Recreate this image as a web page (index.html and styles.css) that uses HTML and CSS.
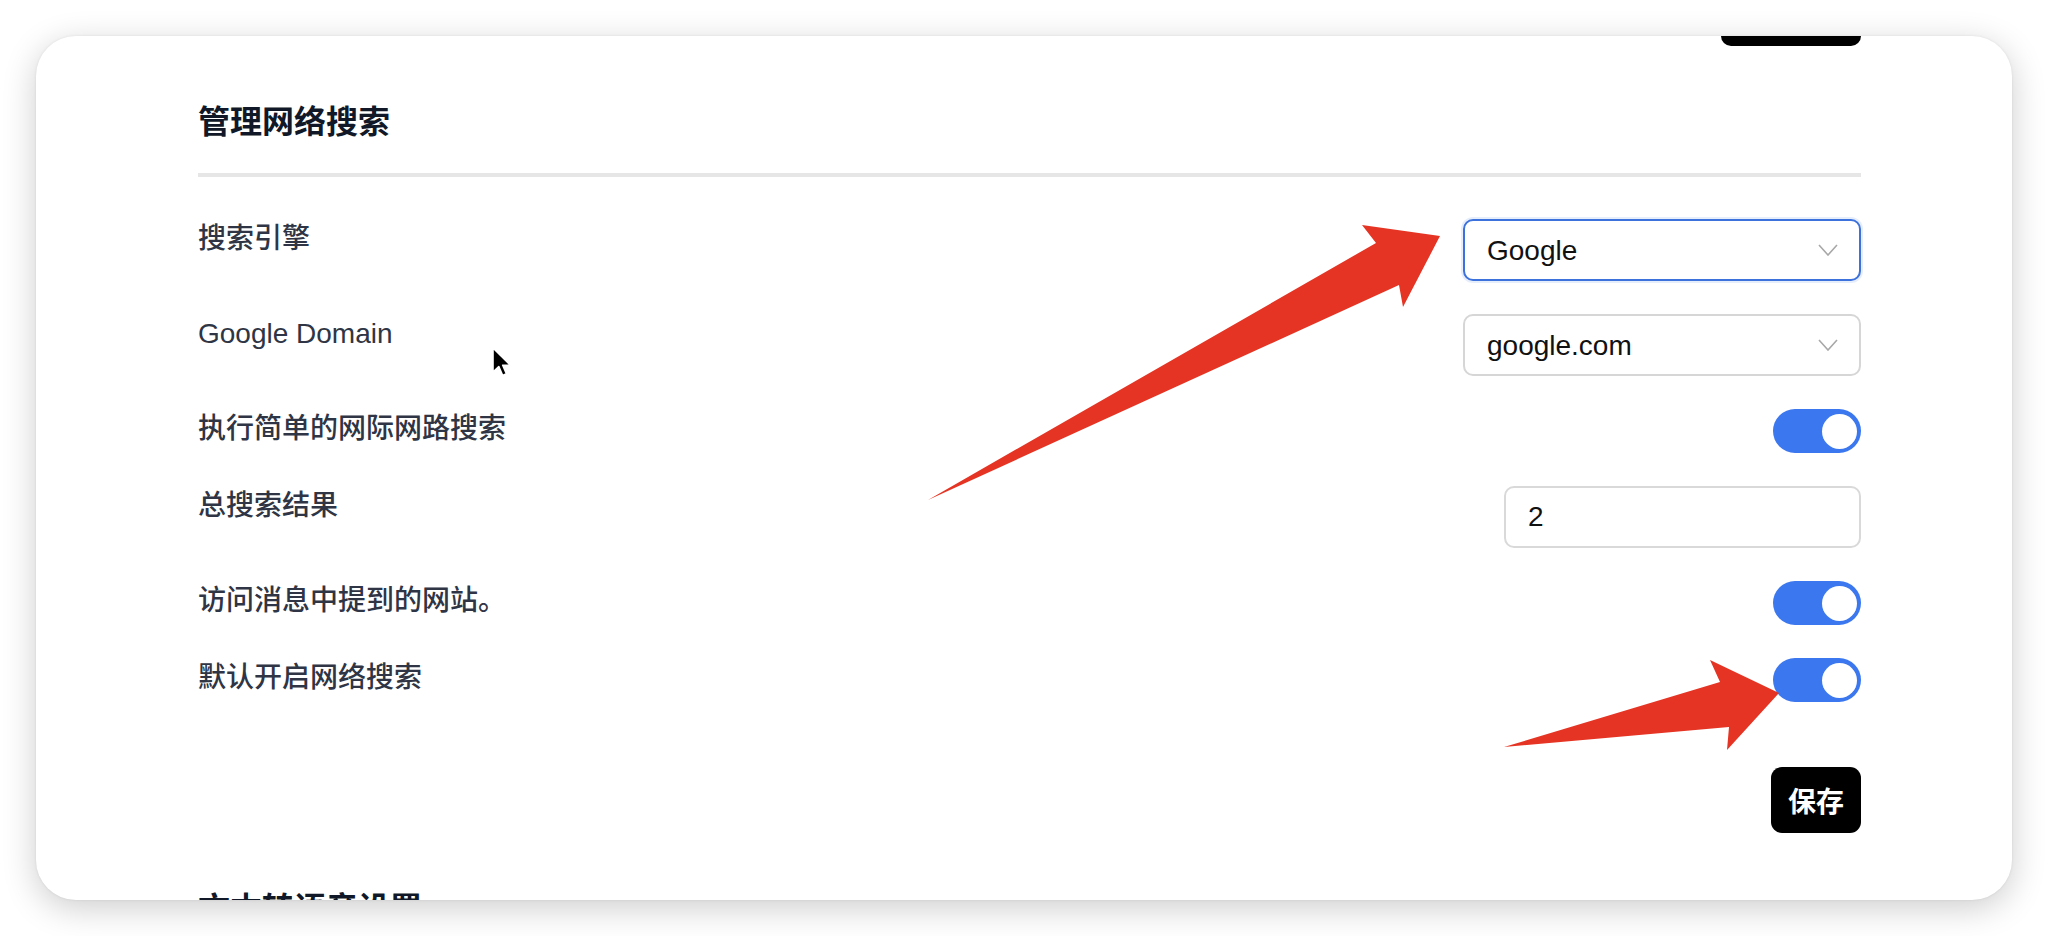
FILE: index.html
```html
<!DOCTYPE html>
<html lang="zh-CN">
<head>
<meta charset="UTF-8">
<meta name="viewport" content="width=device-width, initial-scale=1.0">
<title>管理网络搜索</title>
<link rel="stylesheet" href="styles.css">
</head>
<body>

<div class="window">
  <div class="content">
    <!-- save button of the section above, scrolled almost out of view -->
    <div class="prev-save"></div>

    <h2 class="section-title">管理网络搜索</h2>
    <div class="divider"></div>

    <div class="rows">
      <div class="row">
        <label class="row-label" for="engine">搜索引擎</label>
        <div class="select-wrap focused">
          <select id="engine" class="select">
            <option>Google</option>
            <option>DuckDuckGo</option>
            <option>Bing</option>
          </select>
          <svg class="chevron" width="20" height="12" viewBox="0 0 20 12"><polyline points="1,1 10,11 19,1" fill="none" stroke="#a8a8a8" stroke-width="1.6"/></svg>
        </div>
      </div>

      <div class="row">
        <label class="row-label" for="domain">Google Domain</label>
        <div class="select-wrap">
          <select id="domain" class="select">
            <option>google.com</option>
            <option>google.co.uk</option>
          </select>
          <svg class="chevron" width="20" height="12" viewBox="0 0 20 12"><polyline points="1,1 10,11 19,1" fill="none" stroke="#a8a8a8" stroke-width="1.6"/></svg>
        </div>
      </div>

      <div class="row">
        <span class="row-label">执行简单的网际网路搜索</span>
        <button class="switch" type="button"><span class="knob"></span></button>
      </div>

      <div class="row">
        <label class="row-label" for="total">总搜索结果</label>
        <input id="total" class="text-input" type="number" value="2">
      </div>

      <div class="row">
        <span class="row-label">访问消息中提到的网站。</span>
        <button class="switch" type="button"><span class="knob"></span></button>
      </div>

      <div class="row">
        <span class="row-label">默认开启网络搜索</span>
        <button class="switch" type="button"><span class="knob"></span></button>
      </div>
    </div>

    <div class="actions">
      <button class="save-btn" type="button">保存</button>
    </div>

    <h2 class="section-title next">文本转语音设置</h2>
  </div>
</div>

<!-- annotations drawn on top of the screenshot -->
<svg class="annotations" width="2048" height="936" viewBox="0 0 2048 936">
  <polygon fill="#e53423" points="928,500 1376,243 1362,225 1440,236 1403,307 1399,285"/>
  <polygon fill="#e53423" points="1504,747 1720,682 1710,660 1779,693 1727,750 1729,727"/>
  <g transform="translate(492,347)">
    <path d="M1,1 L1,25 L6.8,19.6 L10.6,28.4 L14.4,26.8 L10.7,18.2 L18.4,18.2 Z" fill="#000" stroke="#fff" stroke-width="1.6" stroke-linejoin="round"/>
  </g>
</svg>

</body>
</html>
```

FILE: styles.css
```css
body {
  margin: 0;
  padding: 36px;
  height: 936px;
  box-sizing: border-box;
  overflow: hidden;
  position: relative;
  background-color: #fff;
  font-family: "Liberation Sans", "Noto Sans CJK SC", sans-serif;
}
.window {
  height: 864px;
  background-color: #fff;
  border-radius: 40px;
  overflow: hidden;
  box-shadow: 0 8px 34px rgba(0, 0, 0, 0.2), 0 0 3px rgba(0, 0, 0, 0.08);
}
.content {
  padding: 0 151px 0 162px;
}
.prev-save {
  width: 140px;
  height: 10px;
  margin-left: auto;
  background-color: #000;
  border-radius: 0 0 12px 12px;
}
.section-title {
  margin: 54px 0 0;
  font-size: 32px;
  line-height: 44px;
  font-weight: 700;
  color: #111827;
}
.section-title.next {
  margin-top: 54px;
}
.divider {
  margin-top: 29px;
  height: 4px;
  background-color: #e6e6e6;
}
.rows {
  margin-top: 42px;
  display: flex;
  flex-direction: column;
  gap: 33px;
}
.row {
  display: flex;
  justify-content: space-between;
  align-items: flex-start;
}
.row-label {
  padding-top: 2px;
  font-size: 28px;
  line-height: 36px;
  font-weight: 500;
  color: #2f3544;
}
.select-wrap {
  position: relative;
  width: 398px;
}
.select {
  width: 100%;
  height: 62px;
  padding: 0 50px 0 22px;
  box-sizing: border-box;
  border: 2px solid #d6d6d6;
  border-radius: 10px;
  background-color: #fff;
  font-family: "Liberation Sans", sans-serif;
  font-size: 28px;
  color: #111;
  appearance: none;
  -webkit-appearance: none;
  outline: none;
}
.select-wrap.focused .select {
  border-color: #3d72dc;
  box-shadow: 0 0 0 2px rgba(61, 114, 220, 0.12);
}
.chevron {
  position: absolute;
  right: 23px;
  top: 25px;
  pointer-events: none;
}
.text-input {
  width: 357px;
  height: 62px;
  padding: 0 22px;
  box-sizing: border-box;
  border: 2px solid #d9d9d9;
  border-radius: 10px;
  font-family: "Liberation Sans", sans-serif;
  font-size: 28px;
  color: #111;
  outline: none;
  -moz-appearance: textfield;
}
.text-input::-webkit-inner-spin-button,
.text-input::-webkit-outer-spin-button {
  -webkit-appearance: none;
  margin: 0;
}
.switch {
  width: 88px;
  height: 44px;
  padding: 0 4px;
  border: none;
  border-radius: 22px;
  background-color: #3b77ee;
  display: flex;
  align-items: center;
  justify-content: flex-end;
  cursor: pointer;
}
.knob {
  width: 35px;
  height: 35px;
  border-radius: 50%;
  background-color: #fff;
}
.actions {
  margin-top: 65px;
  display: flex;
  justify-content: flex-end;
}
.save-btn {
  height: 66px;
  padding: 0 17px;
  border: none;
  border-radius: 11px;
  background-color: #000;
  color: #fff;
  font-family: "Noto Sans CJK SC", sans-serif;
  font-size: 28px;
  font-weight: 700;
  cursor: pointer;
}
.annotations {
  position: absolute;
  top: 0;
  left: 0;
  pointer-events: none;
}
```
